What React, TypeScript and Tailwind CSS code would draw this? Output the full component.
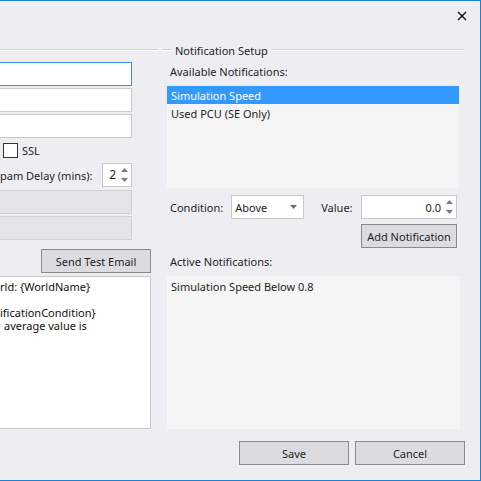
import React from "react";

const Up = () => (
  <svg width="7" height="4" viewBox="0 0 7 4"><path d="M0 4 L3.5 0 L7 4 Z" fill="#7a7a7a" /></svg>
);
const Down = () => (
  <svg width="7" height="4" viewBox="0 0 7 4"><path d="M0 0 L3.5 4 L7 0 Z" fill="#7a7a7a" /></svg>
);

export default function App() {
  return (
    <div className="w-[481px] h-[481px] bg-[#eeeef2] border-t border-r border-b border-[#1883d7] overflow-hidden font-['Noto_Sans',sans-serif] text-[11px] text-[#1e1e1e] leading-none whitespace-nowrap">
      <div className="h-[29px] flex justify-end items-center pr-[13px]">
        <svg width="10" height="10" viewBox="0 0 10 10">
          <path d="M1 1 L9 9 M9 1 L1 9" stroke="#111" strokeWidth="1.4" />
        </svg>
      </div>
      <div className="flex mt-[13px]">
        {/* left column */}
        <div className="w-[158px] flex flex-col">
          <div className="h-[14px] flex items-center">
            <div className="w-full h-[2px] border-t border-[#d0d0dc] border-b border-b-white" />
          </div>
          <div className="mt-[5px] w-[132px] h-[24px] bg-white border border-l-0 border-[#3c8fe0]" />
          <div className="mt-[2px] w-[132px] h-[24px] bg-white border border-l-0 border-[#c8c8c8]" />
          <div className="mt-[2px] w-[132px] h-[24px] bg-white border border-l-0 border-[#c8c8c8]" />
          <div className="mt-[5px] h-[15px] flex items-center">
            <div className="ml-[3px] w-[15px] h-[15px] bg-white border border-[#333]" />
            <span className="ml-[4px]">SSL</span>
          </div>
          <div className="mt-[5px] w-[132px] h-[24px] flex items-center justify-end">
            <span>pam Delay (mins):</span>
            <div className="ml-[9px] w-[37px] h-[24px] bg-white border border-[#c8c8c8] flex items-center justify-end">
              <span className="mr-[5px] text-[12px]">2</span>
              <div className="flex flex-col gap-[6px] mr-[3px]">
                <Up />
                <Down />
              </div>
            </div>
          </div>
          <div className="mt-[3px] w-[132px] h-[24px] bg-[#e4e4e8] border border-l-0 border-[#cfcfcf]" />
          <div className="mt-[2px] w-[132px] h-[24px] bg-[#e4e4e8] border border-l-0 border-[#cfcfcf]" />
          <div className="mt-[9px] ml-[41px] w-[110px] h-[24px] bg-[#dcdce0] border border-[#8a8a8a] flex items-center justify-center">
            Send Test Email
          </div>
          <div className="mt-[3px] w-[151px] h-[153px] bg-white border border-l-0 border-[#c8c8c8] pt-[3px] text-[#111]">
            <div className="h-[13px] leading-[13px]">rld: {"{WorldName}"}</div>
            <div className="h-[13px]" />
            <div className="h-[13px] leading-[13px]">ificationCondition{"}"}</div>
            <div className="h-[13px] leading-[13px] pl-[4px]">average value is</div>
          </div>
        </div>
        {/* right column */}
        <div className="ml-[4px] w-[303px] flex flex-col">
          <div className="h-[14px] flex items-center">
            <div className="w-[9px] h-[2px] border-t border-[#d0d0dc] border-b border-b-white" />
            <span className="ml-[4px] mr-[4px]">Notification Setup</span>
            <div className="flex-1 h-[2px] border-t border-[#d0d0dc] border-b border-b-white" />
          </div>
          <div className="pl-[5px] w-[298px] flex flex-col">
            <div className="mt-[6px] h-[16px] flex items-center pl-[3px]">Available Notifications:</div>
            <div className="mt-[7px] w-[292px] h-[102px] bg-[#f5f5f6]">
              <div className="h-[18px] bg-[#3399ff] text-white flex items-center pl-[4px]">Simulation Speed</div>
              <div className="h-[18px] flex items-center pl-[4px]">Used PCU (SE Only)</div>
            </div>
            <div className="mt-[7px] h-[24px] flex items-center">
              <span className="ml-[3px]">Condition:</span>
              <div className="ml-[8px] w-[73px] h-[24px] bg-white border border-[#c8c8c8] flex items-center justify-between pl-[3px] pr-[6px]">
                <span>Above</span>
                <svg width="7" height="4" viewBox="0 0 7 4"><path d="M0 0 L3.5 4 L7 0 Z" fill="#6d6d6d" /></svg>
              </div>
              <span className="ml-[17px]">Value:</span>
              <div className="ml-auto mr-[3px] w-[96px] h-[24px] bg-white border border-[#c8c8c8] flex items-center justify-end">
                <span className="mr-[5px]">0.0</span>
                <div className="flex flex-col gap-[6px] mr-[3px]">
                  <Up />
                  <Down />
                </div>
              </div>
            </div>
            <div className="mt-[5px] flex justify-end pr-[3px]">
              <div className="w-[96px] h-[24px] bg-[#dcdce0] border border-[#8a8a8a] flex items-center justify-center">
                Add Notification
              </div>
            </div>
            <div className="mt-[5px] h-[16px] flex items-center pl-[3px]">Active Notifications:</div>
            <div className="mt-[7px] w-[293px] h-[153px] bg-[#f5f5f6] pt-[3px]">
              <div className="h-[15px] flex items-center pl-[4px]">Simulation Speed Below 0.8</div>
            </div>
          </div>
          <div className="mt-[12px] flex justify-end gap-[6px]">
            <div className="w-[110px] h-[24px] bg-[#dcdce0] border border-[#8a8a8a] flex items-center justify-center">Save</div>
            <div className="w-[110px] h-[24px] bg-[#dcdce0] border border-[#8a8a8a] flex items-center justify-center">Cancel</div>
          </div>
        </div>
      </div>
    </div>
  );
}
